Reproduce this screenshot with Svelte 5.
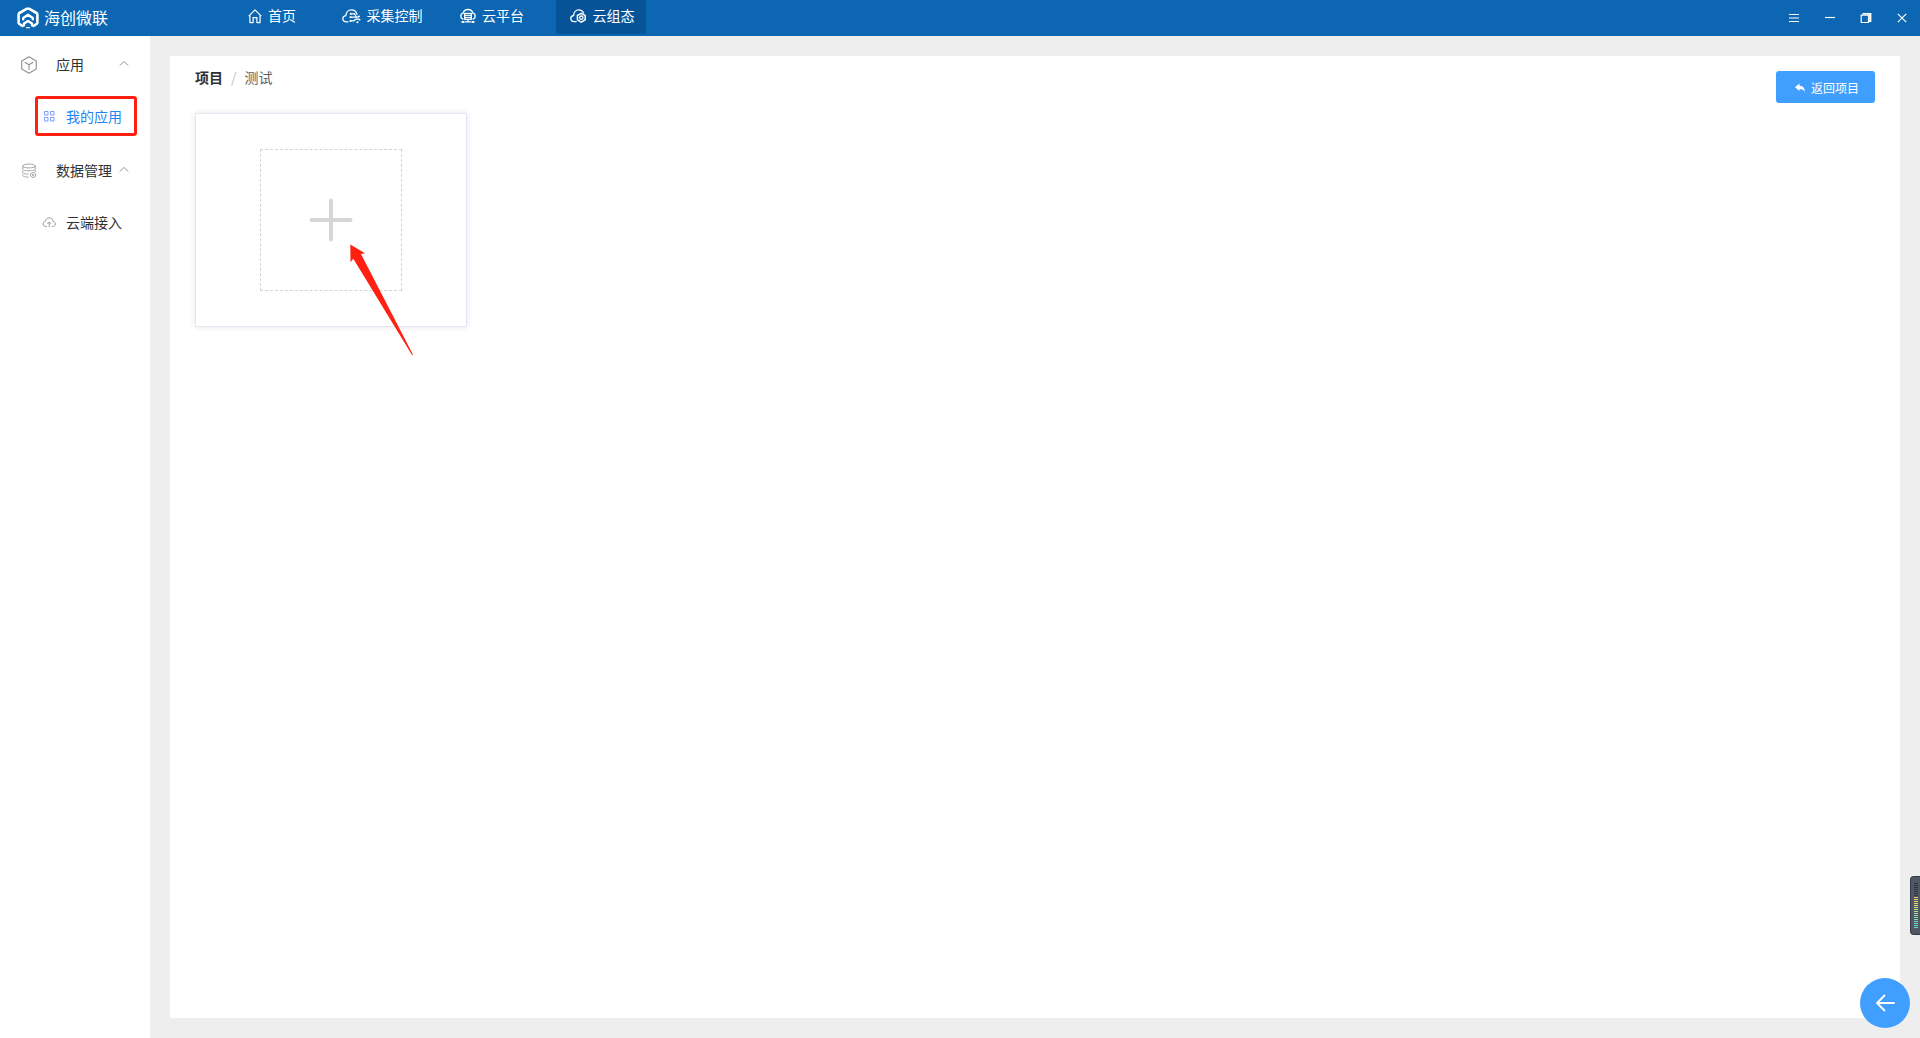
<script>
    const tabs = [
        { id: 'home', label: '首页' },
        { id: 'collect', label: '采集控制' },
        { id: 'cloud', label: '云平台' },
        { id: 'scada', label: '云组态' }
    ];

    const groups = [
        { id: 'app', label: '应用', items: [{ id: 'mine', label: '我的应用' }] },
        { id: 'data', label: '数据管理', items: [{ id: 'access', label: '云端接入' }] }
    ];

    // level meter, top bar first
    const bars = [
        '#30353f', '#30353f', '#30353f', '#30353f', '#30353f', '#30353f', '#30353f',
        '#f0c45c', '#efcd60', '#ecd765', '#e6de6b', '#dce373', '#cfe47c', '#c1e486', '#b2e290',
        '#a4e09a', '#98dea3', '#8ddcaa', '#84d9b1', '#7cd8b8', '#76d6be', '#70d5c4', '#6cd4c9'
    ];

    let activeTab = $state('scada');
    let activeItem = $state('mine');
    let closed = $state({});

    function toggle(id) {
        closed[id] = !closed[id];
    }
</script>

<div class="page">
    <header>
        <div class="brand">
            <svg width="24" height="24" viewBox="0 0 24 24" fill="none" stroke="#fff" stroke-linejoin="round" stroke-linecap="round">
                <path d="M6.400 20L3.200 17.800 2.600 16.800V8.200L3.400 7 11 2.700h2L20.600 7l.8 1.200v8.600l-.6 1L17.600 20" stroke-width="2.600" />
                <path d="M7.200 13.200V12L12 8.800l4.800 3.200v1.200" stroke-width="2.400" />
                <path d="M8 19.200v-1.600l4-2.600 4 2.600v1.600" stroke-width="2.400" />
                <path d="M10.600 21.600h2.800" stroke-width="1.200" />
            </svg>
            <span>海创微联</span>
        </div>

        <nav class="tabs">
            {#each tabs as tab}
                <button class="tab" class:active={activeTab === tab.id} onclick={() => (activeTab = tab.id)}>
                    {#if tab.id === 'home'}
                        <svg width="14" height="16" viewBox="0 0 14 16" fill="none" stroke="#fff" stroke-width="1.2" stroke-linejoin="round">
                            <path d="M.7 8.100L7 1.800l6.300 6.300M1.900 7.200v7.400h3.200V9.600h3.800v5h3.200V7.200" />
                        </svg>
                    {:else if tab.id === 'collect'}
                        <svg width="19" height="16" viewBox="0 0 19 16" fill="none" stroke="#fff" stroke-width="1.3" stroke-linecap="round">
                            <path d="M6 13.800H4.400C2.300 13.800.8 12.600.8 10.800c0-1.700 1.300-3 3-3.200C4 4.400 6.300 1.800 9.500 1.800c2.700 0 4.700 1.500 5.400 4.200" />
                            <path d="M8.800 5.800h3.600M8.800 9.200h7M8.600 12.800h3.200" />
                            <path d="M12.600 5.800l1.800 3.200M12.200 12.600l1.600-1.400h3" />
                            <path d="M8.600 5.800h.2M8.400 9.200h.2M16.800 8.400h.2M17.400 11.600h.2M15.400 14.200h.2M8.400 13h.2" stroke-width="1.900" />
                        </svg>
                    {:else if tab.id === 'cloud'}
                        <svg width="16" height="16" viewBox="0 0 16 16" fill="none" stroke="#fff" stroke-width="1.300">
                            <path d="M3.400 11.400C1.800 10.900.8 9.700.8 8.100c0-1.600.9-2.700 2.300-3C3.700 3 5.600 1.500 8 1.500s4.300 1.500 4.900 3.600c1.400.3 2.300 1.400 2.300 3 0 1.600-1 2.800-2.600 3.300" />
                            <rect x="4.700" y="5.500" width="6.600" height="5.800" />
                            <path d="M5 7.400h6M5 9.400h6" stroke-width="1" />
                            <path d="M8 11.300v2.500M4.500 13.900h7" />
                            <path d="M1.600 13.900h2.600M11.800 13.900h2.600" stroke-width="2" />
                        </svg>
                    {:else}
                        <svg width="17" height="16" viewBox="0 0 17 16" fill="none" stroke="#fff" stroke-width="1.300">
                            <path d="M6.600 13.600H4.200C2.100 13.600.8 12.400.8 10.600c0-1.700 1.200-2.900 2.800-3.100C3.800 4.300 5.900 1.900 8.700 1.900c2.400 0 4.200 1.200 5 3.400" />
                            <path d="M11.300 5.300l3.900 2.200v4.400l-3.900 2.200-3.900-2.200V7.500z" stroke-width="1.500" />
                            <circle cx="11.300" cy="9.700" r="1.700" />
                        </svg>
                    {/if}
                    {tab.label}
                </button>
            {/each}
        </nav>

        <div class="window-controls">
            <button aria-label="菜单">
                <svg width="12" height="12" viewBox="0 0 12 12"><path d="M1 2.500h10M1 6h10M1 9.500h10" /></svg>
            </button>
            <button aria-label="最小化">
                <svg width="12" height="12" viewBox="0 0 12 12"><path d="M1 5.500h10" /></svg>
            </button>
            <button aria-label="还原">
                <svg width="12" height="12" viewBox="0 0 12 12"><path d="M1.200 3.200h7.300v7.300H1.200zM2.500 1.700h8.300v7.800H9M9.800 2v7" /></svg>
            </button>
            <button aria-label="关闭">
                <svg width="12" height="12" viewBox="0 0 12 12"><path d="M1.800 1.800l8.400 8.400M10.200 1.800l-8.400 8.400" /></svg>
            </button>
        </div>
    </header>

    <div class="body">
        <aside>
            {#each groups as group}
                <button class="group" aria-expanded={!closed[group.id]} onclick={() => toggle(group.id)}>
                    {#if group.id === 'app'}
                        <svg width="18" height="18" viewBox="0 0 18 18" fill="none" stroke="#8d9095" stroke-width="1.100" stroke-linejoin="round">
                            <path d="M9 .8l7.300 4.200v8L9 17.200 1.700 13V5z" />
                            <path d="M4.800 6.200L9 8.700l4.200-2.500M9 8.700v5" />
                        </svg>
                    {:else}
                        <svg width="18" height="18" viewBox="0 0 18 18" fill="none" stroke="#a3a6aa">
                            <ellipse cx="9" cy="4" rx="6.300" ry="1.900" />
                            <path d="M2.700 4v3c0 1 2.800 1.800 6.300 1.800s6.300-.8 6.300-1.800V4M2.700 8.800v1.500c0 1 2.300 1.700 6 1.800M2.700 12.300v1.200c0 .9 2.300 1.600 6 1.700M15.300 8v2" />
                            <path d="M13 10.400l2.400 1.300v2.600L13 15.600l-2.400-1.300v-2.600z" />
                            <circle cx="13" cy="13" r=".7" />
                        </svg>
                    {/if}
                    <span>{group.label}</span>
                    <svg class="chevron" width="10" height="10" viewBox="0 0 10 10" fill="none" stroke="#909399">
                        <path d="M.8 6.600L5 2.400l4.200 4.200" />
                    </svg>
                </button>
                {#if !closed[group.id]}
                    {#each group.items as item}
                        <a class="item" class:active={activeItem === item.id} href="#{item.id}" onclick={() => (activeItem = item.id)}>
                            {#if item.id === 'mine'}
                                <svg width="14" height="14" viewBox="0 0 14 14" fill="none" stroke="#7d9cff">
                                    <path d="M2.500 2.500h3.500v3.500h-3.500zM8.500 2.500h3.500v3.500h-3.500zM2.500 8.500h3.500v3.500h-3.500zM8.500 8.500h3.500v3.500h-3.500z" />
                                </svg>
                            {:else}
                                <svg width="14" height="14" viewBox="0 0 14 14" fill="none" stroke="#9a9da2">
                                    <path d="M4.700 11.500H3.900C2.200 11.500 1 10.500 1 9c0-1.300.9-2.300 2.200-2.500.2-2.200 2-3.700 4-3.700s3.800 1.500 4 3.700c1.300.2 2.200 1.200 2.200 2.500 0 1.500-1.200 2.500-2.900 2.500h-.8" />
                                    <path d="M7.200 12V7M5.200 9l2-2 2 2" />
                                </svg>
                            {/if}
                            {item.label}
                        </a>
                    {/each}
                {/if}
            {/each}
        </aside>

        <main>
            <section class="panel">
                <div class="toolbar">
                    <nav class="breadcrumb" aria-label="路径">
                        <a href="#projects">项目</a>
                        <span class="separator">/</span>
                        <span>测试</span>
                    </nav>
                    <button class="back">
                        <svg width="12" height="12" viewBox="0 0 12 12">
                            <path d="M1 5.200L5.500 1.500v2.200c3.600.1 5.300 2.300 5.300 6-1.300-2.100-2.900-2.800-5.300-2.800v2.200z" fill="#fff" />
                        </svg>
                        返回项目
                    </button>
                </div>

                <div class="card">
                    <button class="add" aria-label="新建应用">
                        <svg width="44" height="44" viewBox="0 0 44 44">
                            <path d="M22 2.500v39M2.500 22h39" stroke="#d6d6d6" stroke-width="4" stroke-linecap="round" />
                        </svg>
                    </button>
                    <svg class="pointer" width="64" height="112" viewBox="0 0 64 112">
                        <path d="M.3.500L15 9.200l-4 .9L63 110.700l-1 .4L3.300 14.800.5 18.200z" fill="#ff2012" />
                    </svg>
                </div>
            </section>
        </main>
    </div>

    <div class="meter">
        {#each bars as color}
            <i style="background: {color}"></i>
        {/each}
    </div>

    <button class="float-back" aria-label="返回">
        <svg width="20" height="18" viewBox="0 0 20 18" fill="none" stroke="#fff" stroke-width="1.800" stroke-linecap="round" stroke-linejoin="round">
            <path d="M9.500 1.500L2 9l7.500 7.500M2 9h17" />
        </svg>
    </button>
</div>

<style>
    :global(body) {
        background: #eee;
    }

    .page {
        display: flex;
        flex-direction: column;
        min-height: 100vh;
        color: #303133;
        font-family: "Microsoft YaHei", "Noto Sans CJK SC", sans-serif;
        font-size: 14px;
        line-height: 20px;
    }

    button {
        padding: 0;
        border: none;
        background: none;
        color: inherit;
        font: inherit;
        cursor: pointer;
    }

    a {
        color: inherit;
        text-decoration: none;
    }

    svg {
        flex: none;
    }

    header {
        display: flex;
        height: 36px;
        background: #0c66b2;
        color: #fff;
    }

    .brand {
        display: flex;
        align-items: center;
        gap: 4px;
        box-sizing: border-box;
        width: 226px;
        padding-left: 16px;
        font-size: 16px;
    }

    .brand span {
        padding-bottom: 2px;
    }

    .tabs {
        display: flex;
        flex: 1;
        gap: 20px;
    }

    .tab {
        display: flex;
        align-items: center;
        justify-content: center;
        gap: 6px;
        box-sizing: border-box;
        width: 90px;
        height: 34px;
        padding: 0 0 4px 2px;
        white-space: nowrap;
    }

    .tab svg {
        margin-top: 2px;
    }

    .tab.active {
        background: #065397;
    }

    .window-controls {
        display: flex;
    }

    .window-controls button {
        display: flex;
        align-items: center;
        justify-content: center;
        width: 36px;
    }

    .window-controls path {
        fill: none;
        stroke: #fff;
        stroke-width: 1.2;
    }

    .body {
        display: flex;
        flex: 1;
    }

    aside {
        box-sizing: border-box;
        width: 150px;
        padding-top: 2px;
        background: #fff;
    }

    .group {
        display: flex;
        align-items: center;
        width: 100%;
        height: 53px;
        padding: 0 21px 0 20px;
        text-align: left;
    }

    .group span {
        flex: 1;
        margin-left: 18px;
        padding-bottom: 2px;
    }

    .group[aria-expanded="false"] .chevron {
        transform: rotate(180deg);
    }

    .chevron {
        margin-bottom: 2px;
    }

    .item {
        display: flex;
        align-items: center;
        gap: 10px;
        box-sizing: border-box;
        height: 40px;
        margin: 5px 13px 8px 35px;
        padding-left: 4px;
        border: 3px solid transparent;
        border-radius: 3px;
    }

    .item.active {
        border-color: #ff2012;
        color: #1e87f5;
    }

    main {
        display: flex;
        flex: 1;
        padding: 20px;
    }

    .panel {
        flex: 1;
        padding: 15px 25px;
        background: #fff;
    }

    .toolbar {
        display: flex;
        justify-content: space-between;
        align-items: flex-start;
        height: 42px;
    }

    .breadcrumb {
        display: flex;
        color: #606266;
        line-height: 12px;
    }

    .breadcrumb a {
        color: #303133;
        font-weight: 700;
    }

    .separator {
        margin: 0 8px;
        color: #c0c4cc;
    }

    .back {
        display: flex;
        align-items: center;
        justify-content: center;
        gap: 5px;
        box-sizing: border-box;
        width: 99px;
        height: 32px;
        padding: 2px 0 0 2px;
        border-radius: 3px;
        background: #409eff;
        color: #fff;
        font-size: 12px;
    }

    .card {
        display: flex;
        align-items: center;
        justify-content: center;
        position: relative;
        box-sizing: border-box;
        width: 272px;
        height: 214px;
        border: 1px solid #dfe8f3;
        box-shadow: 0 0 6px rgba(0, 0, 0, 0.1);
    }

    .add {
        display: flex;
        align-items: center;
        justify-content: center;
        width: 142px;
        height: 142px;
        border: 1px dashed #d3d3d3;
    }

    .pointer {
        position: absolute;
        top: 130px;
        left: 154px;
        pointer-events: none;
    }

    .meter {
        position: fixed;
        right: 0;
        bottom: 103px;
        display: flex;
        flex-direction: column;
        gap: 1px;
        box-sizing: border-box;
        width: 10px;
        height: 59px;
        padding: 6px 2px 0 3px;
        border: 1px solid #343a46;
        border-right: none;
        border-radius: 4px 0 0 4px;
        background: #505866;
    }

    .meter i {
        height: 1px;
    }

    .float-back {
        position: fixed;
        right: 10px;
        bottom: 10px;
        display: flex;
        align-items: center;
        justify-content: center;
        width: 50px;
        height: 50px;
        border-radius: 50%;
        background: #409eff;
    }
</style>
